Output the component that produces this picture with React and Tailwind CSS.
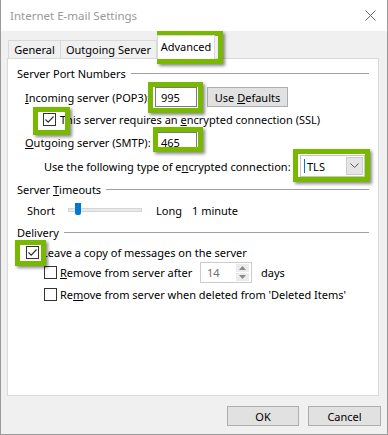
import React from 'react';

const font = { fontFamily: '"Segoe UI", "Noto Sans", "Open Sans", sans-serif' };

const Check = ({ checked }) => (
    <span className="w-[13px] h-[13px] border border-[#333333] bg-white flex items-center justify-center shrink-0">
        {checked && (
            <svg width="11" height="11" viewBox="0 0 11 11">
                <path d="M1.5 5.5 L4.2 8.2 L9.5 2.5" fill="none" stroke="#333333" strokeWidth="1.2" />
            </svg>
        )}
    </span>
);

const Heading = ({ children }) => (
    <div className="flex items-center h-[16px] pl-[9px] pr-[9px]">
        <span>{children}</span>
        <div className="flex-1 h-px bg-[#a0a0a0] ml-[5px]" />
    </div>
);

const Mark = ({ className }) => (
    <div className={`absolute border-[5px] border-[#78b800] shadow-[2px_2px_3px_rgba(0,0,0,0.45)] ${className}`} />
);

const App = () => {
    return (
        <div
            className="relative w-[388px] h-[435px] bg-[#f0f0f0] border-l border-r border-b border-[#9a9a9a] flex flex-col text-[11px] text-black leading-none whitespace-nowrap"
            style={font}
        >
            {/* title bar */}
            <div className="h-[31px] bg-white flex items-center justify-between pl-[9px] pr-[10px] shrink-0">
                <span className="text-[11.5px] text-[#999999]">Internet E-mail Settings</span>
                <svg width="11" height="11" viewBox="0 0 11 11" className="mr-[1px]">
                    <path d="M0.5 0.5 L10.5 10.5 M10.5 0.5 L0.5 10.5" stroke="#666666" strokeWidth="1" />
                </svg>
            </div>

            {/* tabs */}
            <div className="flex items-end pl-[7px] pt-[4px] shrink-0 relative z-10">
                <div className="w-[53px] h-[18px] border border-b-0 border-[#d9d9d9] flex items-center justify-center">General</div>
                <div className="w-[96px] h-[18px] border border-l-0 border-b-0 border-[#d9d9d9] flex items-center justify-center">Outgoing Server</div>
                <div className="w-[58px] h-[24px] -mb-px bg-white border border-b-0 border-[#d9d9d9] flex items-center justify-center pb-[2px]">Advanced</div>
            </div>

            {/* panel */}
            <div className="ml-[6px] mr-[8px] h-[338px] bg-white border border-[#d9d9d9] flex flex-col pt-[6px] shrink-0">
                <Heading>Server Port Numbers</Heading>

                <div className="flex items-center mt-[6px] h-[20px] pl-[17px]">
                    <span className="w-[130px]"><u>I</u>ncoming server (POP3):</span>
                    <div className="w-[42px] h-[20px] border border-[#7a7a7a] flex items-center pl-[5px]">995</div>
                    <button className="ml-[10px] w-[81px] h-[20px] bg-[#e1e1e1] border border-[#adadad] flex items-center justify-center">
                        <span>Use <u>D</u>efaults</span>
                    </button>
                </div>

                <div className="flex items-center mt-[6px] h-[13px] pl-[35px]">
                    <Check checked />
                    <span className="ml-[4px]">This server requires an <u>e</u>ncrypted connection (SSL)</span>
                </div>

                <div className="flex items-center mt-[6px] h-[20px] pl-[17px]">
                    <span className="w-[130px]"><u>O</u>utgoing server (SMTP):</span>
                    <div className="w-[42px] h-[20px] border border-[#7a7a7a] flex items-center pl-[5px]">465</div>
                </div>

                <div className="flex items-center mt-[3px] h-[22px] pl-[36px]">
                    <span className="w-[256px]">Use the following type of e<u>n</u>crypted connection:</span>
                    <div className="w-[65px] h-[22px] border border-[#c6c6c6] bg-white flex items-center">
                        <span className="w-px h-[14px] bg-[#0078d7] ml-[3px]" />
                        <span className="ml-[2px] flex-1">TLS</span>
                        <span className="w-[17px] h-[18px] mr-[1px] bg-[#e5e5e5] border border-[#cccccc] flex items-center justify-center">
                            <svg width="9" height="6" viewBox="0 0 9 6">
                                <path d="M0.5 0.5 L4.5 4.5 L8.5 0.5" fill="none" stroke="#555555" strokeWidth="1" />
                            </svg>
                        </span>
                    </div>
                </div>

                <div className="mt-[4px]">
                    <Heading>Server <u>T</u>imeouts</Heading>
                </div>

                <div className="flex items-center mt-[5px] h-[16px] pl-[19px]">
                    <span className="w-[41px]">Short</span>
                    <div className="relative w-[74px] h-[4px] bg-[#e7eaea] border border-[#d6d6d6]">
                        <div className="absolute left-[6px] -top-[6px] w-[6px] h-[12px] bg-[#0078d7] rounded-b-[2px]" />
                    </div>
                    <span className="ml-[14px] w-[36px]">Long</span>
                    <span>1 minute</span>
                </div>

                <div className="mt-[6px]">
                    <Heading>Delivery</Heading>
                </div>

                <div className="flex items-center mt-[6px] h-[13px] pl-[18px]">
                    <Check checked />
                    <span className="ml-[3px]">Leave a copy of messages on the server</span>
                </div>

                <div className="flex items-center mt-[3px] h-[21px] pl-[36px]">
                    <Check />
                    <span className="ml-[3px] w-[140px]"><u>R</u>emove from server after</span>
                    <div className="w-[52px] h-[21px] border border-[#cccccc] flex items-center">
                        <span className="flex-1 pl-[6px] text-[#6d6d6d]">14</span>
                        <div className="w-[13px] h-[17px] mr-[2px] flex flex-col gap-px">
                            <span className="flex-1 bg-[#ebebeb] flex items-center justify-center">
                                <svg width="7" height="4" viewBox="0 0 7 4"><path d="M0 4 L3.5 0 L7 4 Z" fill="#8a8a8a" /></svg>
                            </span>
                            <span className="flex-1 bg-[#ebebeb] flex items-center justify-center">
                                <svg width="7" height="4" viewBox="0 0 7 4"><path d="M0 0 L3.5 4 L7 0 Z" fill="#8a8a8a" /></svg>
                            </span>
                        </div>
                    </div>
                    <span className="ml-[9px]">days</span>
                </div>

                <div className="flex items-center mt-[5px] h-[13px] pl-[36px]">
                    <Check />
                    <span className="ml-[3px]">Re<u>m</u>ove from server when deleted from 'Deleted Items'</span>
                </div>
            </div>

            {/* buttons */}
            <div className="flex justify-end gap-[9px] mt-[10px] pr-[6px]">
                <button className="w-[72px] h-[20px] bg-[#e1e1e1] border border-[#adadad]">OK</button>
                <button className="w-[73px] h-[20px] bg-[#e1e1e1] border border-[#adadad]">Cancel</button>
            </div>

            {/* highlight marks */}
            <Mark className="left-[156px] top-[31px] w-[66px] h-[33px]" />
            <Mark className="left-[147px] top-[82px] w-[55px] h-[31px]" />
            <Mark className="left-[32px] top-[107px] w-[37px] h-[28px]" />
            <Mark className="left-[152px] top-[127px] w-[50px] h-[25px]" />
            <Mark className="left-[292px] top-[149px] w-[77px] h-[33px]" />
            <Mark className="left-[14px] top-[240px] w-[31px] h-[26px]" />
        </div>
    );
};

export default App;
